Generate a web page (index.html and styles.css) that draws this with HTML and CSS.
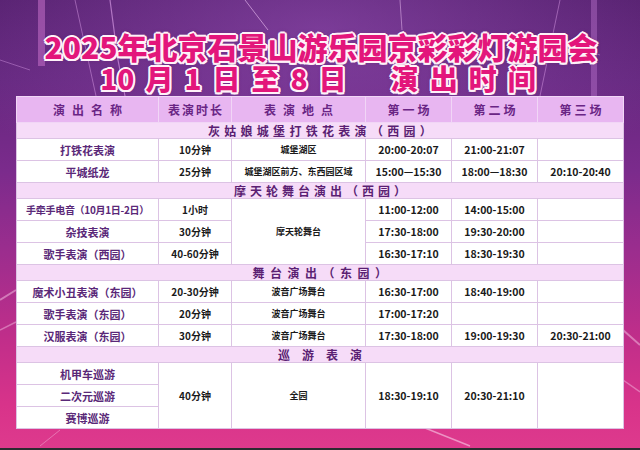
FILE: index.html
```html
<!DOCTYPE html>
<html lang="zh-CN">
<head>
<meta charset="utf-8">
<title>2025年北京石景山游乐园京彩彩灯游园会 演出时间</title>
<link rel="stylesheet" href="styles.css">
</head>
<body>
<div class="page">
  <svg class="deco" width="640" height="450" viewBox="0 0 640 450" aria-hidden="true">
    <defs>
      <radialGradient id="glow" cx="50%" cy="10%" r="60%">
        <stop offset="0" stop-color="#a35ac4" stop-opacity="0.45"/>
        <stop offset="1" stop-color="#a35ac4" stop-opacity="0"/>
      </radialGradient>
    </defs>
    <rect x="0" y="0" width="640" height="300" fill="url(#glow)"/>
    <rect x="38" y="0" width="7" height="66" fill="#c46fc8" opacity="0.55"/>
    <path d="M110 0 L118 60 L125 96" stroke="#e4a6f0" stroke-width="1.2" fill="none" opacity="0.6"/>
    <path d="M75 0 L96 96" stroke="#e4a6f0" stroke-width="1" fill="none" opacity="0.45"/>
    <path d="M245 0 L268 30" stroke="#f0c4f6" stroke-width="1" fill="none" opacity="0.6"/>
    <path d="M400 0 L402 30" stroke="#f0c4f6" stroke-width="1" fill="none" opacity="0.5"/>
    <path d="M560 0 L540 96" stroke="#e4a6f0" stroke-width="1" fill="none" opacity="0.45"/>
    <path d="M594 0 L594 96" stroke="#c47ad4" stroke-width="6" fill="none" opacity="0.4"/>
    <path d="M0 60 L30 70" stroke="#e4a6f0" stroke-width="1" fill="none" opacity="0.4"/>
    <path d="M560 40 L600 55" stroke="#e4a6f0" stroke-width="1" fill="none" opacity="0.4"/>
    <path d="M0 300 L16 290" stroke="#f6c6e6" stroke-width="2" fill="none" opacity="0.5"/>
    <path d="M0 330 L16 322" stroke="#f6c6e6" stroke-width="1.5" fill="none" opacity="0.45"/>
    <path d="M623 330 L640 345" stroke="#f6c6e6" stroke-width="2" fill="none" opacity="0.5"/>
    <path d="M623 380 L640 392" stroke="#f6c6e6" stroke-width="1.5" fill="none" opacity="0.45"/>
    <path d="M425 428 L470 446" stroke="#f8d0ea" stroke-width="1.5" fill="none" opacity="0.6"/>
    <path d="M40 446 L60 430" stroke="#f8d0ea" stroke-width="1" fill="none" opacity="0.4"/>
  </svg>

  <header class="title">
    <h1 class="title-main">2025年北京石景山游乐园京彩彩灯游园会</h1>
    <p class="title-sub">10<span class="sp"></span>月<span class="sp"></span>1<span class="sp"></span>日<span class="sp"></span>至<span class="sp"></span>8<span class="sp"></span>日<span class="gap"></span>演<span class="sp"></span>出<span class="sp"></span>时<span class="sp"></span>间</p>
  </header>

  <table class="sched">
    <colgroup>
      <col class="c1"><col class="c2"><col class="c3"><col class="c4"><col class="c5"><col class="c6">
    </colgroup>
    <tr class="hd">
      <td class="wide">演出名称</td>
      <td class="narrow">表演时长</td>
      <td class="wide">表演地点</td>
      <td class="mid">第一场</td>
      <td class="mid">第二场</td>
      <td class="mid">第三场</td>
    </tr>
    <tr class="sec"><td colspan="6" class="s1">灰姑娘城堡打铁花表演（西园）</td></tr>
    <tr class="row">
      <td class="name">打铁花表演</td><td class="dur">10分钟</td><td class="loc">城堡湖区</td>
      <td class="tm">20:00-20:07</td><td class="tm">21:00-21:07</td><td class="tm"></td>
    </tr>
    <tr class="row">
      <td class="name">平城纸龙</td><td class="dur">25分钟</td><td class="loc">城堡湖区前方、东西园区域</td>
      <td class="tm">15:00—15:30</td><td class="tm">18:00—18:30</td><td class="tm">20:10-20:40</td>
    </tr>
    <tr class="sec"><td colspan="6" class="s2">摩天轮舞台演出（西园）</td></tr>
    <tr class="row">
      <td class="name tight">手牵手电音（10月1日-2日）</td><td class="dur">1小时</td><td class="loc" rowspan="3">摩天轮舞台</td>
      <td class="tm">11:00-12:00</td><td class="tm">14:00-15:00</td><td class="tm"></td>
    </tr>
    <tr class="row">
      <td class="name">杂技表演</td><td class="dur">30分钟</td>
      <td class="tm">17:30-18:00</td><td class="tm">19:30-20:00</td><td class="tm"></td>
    </tr>
    <tr class="row">
      <td class="name">歌手表演（西园）</td><td class="dur">40-60分钟</td>
      <td class="tm">16:30-17:10</td><td class="tm">18:30-19:30</td><td class="tm"></td>
    </tr>
    <tr class="sec"><td colspan="6" class="s3">舞台演出（东园）</td></tr>
    <tr class="row">
      <td class="name">魔术小丑表演（东园）</td><td class="dur">20-30分钟</td><td class="loc">波音广场舞台</td>
      <td class="tm">16:30-17:00</td><td class="tm">18:40-19:00</td><td class="tm"></td>
    </tr>
    <tr class="row">
      <td class="name">歌手表演（东园）</td><td class="dur">20分钟</td><td class="loc">波音广场舞台</td>
      <td class="tm">17:00-17:20</td><td class="tm"></td><td class="tm"></td>
    </tr>
    <tr class="row">
      <td class="name">汉服表演（东园）</td><td class="dur">30分钟</td><td class="loc">波音广场舞台</td>
      <td class="tm">17:30-18:00</td><td class="tm">19:00-19:30</td><td class="tm">20:30-21:00</td>
    </tr>
    <tr class="sec"><td colspan="6" class="s4">巡游表演</td></tr>
    <tr class="row">
      <td class="name">机甲车巡游</td><td class="dur" rowspan="3">40分钟</td><td class="loc" rowspan="3">全园</td>
      <td class="tm" rowspan="3">18:30-19:10</td><td class="tm" rowspan="3">20:30-21:10</td><td class="tm" rowspan="3"></td>
    </tr>
    <tr class="row"><td class="name">二次元巡游</td></tr>
    <tr class="row"><td class="name">赛博巡游</td></tr>
  </table>
  <div class="floor"></div>
</div>
</body>
</html>
```

FILE: styles.css
```css
html, body {
  margin: 0;
  padding: 0;
}
body {
  font-family: "Noto Sans CJK SC", "Noto Sans", sans-serif;
  background: #2a2a2e;
}
.page {
  position: relative;
  width: 640px;
  height: 450px;
  overflow: hidden;
  display: flex;
  flex-direction: column;
  background: linear-gradient(180deg, #55206e 0%, #65287f 18%, #7b2b8c 38%, #9a2d8e 55%, #c02e8a 75%, #d8338a 90%, #de3a8d 100%);
}
.deco {
  position: absolute;
  left: 0;
  top: 0;
  z-index: 0;
}
.title {
  position: relative;
  z-index: 1;
  padding-top: 29px;
  text-align: center;
}
.title-main,
.title-sub {
  margin: 0;
  font-weight: 900;
  color: #e3167b;
  text-shadow:
    2px 0 0 #fff2f9, -2px 0 0 #fff2f9, 0 2px 0 #fff2f9, 0 -2px 0 #fff2f9,
    1.5px 1.5px 0 #fff2f9, -1.5px 1.5px 0 #fff2f9, 1.5px -1.5px 0 #fff2f9, -1.5px -1.5px 0 #fff2f9,
    0 0 4px rgba(90, 20, 90, 0.6);
}
.title-main {
  font-size: 30px;
  line-height: 34px;
  letter-spacing: 0;
  padding-left: 2px;
}
.title-sub {
  font-size: 28px;
  line-height: 30px;
  padding-right: 4px;
}
.title-sub .sp {
  display: inline-block;
  width: 11px;
}
.title-sub .gap {
  display: inline-block;
  width: 44px;
}
.sched {
  position: relative;
  z-index: 1;
  margin: 3px 0 0 16px;
  width: 607px;
  table-layout: fixed;
  border-collapse: collapse;
  background: #ffffff;
  color: #1a1a1a;
  font-weight: 700;
  text-align: center;
}
.c1 { width: 142px; }
.c2 { width: 73px; }
.c3 { width: 134px; }
.c4 { width: 86px; }
.c5 { width: 86px; }
.c6 { width: 86px; }
.sched td {
  padding: 0;
  border: 1px solid #dcc3e4;
  vertical-align: middle;
  white-space: nowrap;
  overflow: hidden;
}
.hd td {
  height: 25px;
  background: #e8b6f1;
  border-color: #f1d6f6;
  color: #6a2585;
  font-size: 12px;
  line-height: 14px;
}
.hd .wide { letter-spacing: 7px; text-indent: 7px; }
.hd .narrow { letter-spacing: 2px; text-indent: 2px; }
.hd .mid { letter-spacing: 3px; text-indent: 3px; }
.sec td {
  height: 15px;
  background: #f6dcf8;
  color: #5b1f73;
  font-size: 12px;
  line-height: 14px;
}
.s1 { letter-spacing: 4.3px; text-indent: 4px; }
.s2 { letter-spacing: 4px; text-indent: 4px; }
.s3 { letter-spacing: 5.5px; text-indent: 5px; }
.s4 { letter-spacing: 12px; text-indent: 12px; }
.row td {
  height: 21px;
  line-height: 14px;
}
.name {
  color: #5a2878;
  font-size: 11px;
}
.name.tight {
  font-size: 10px;
  letter-spacing: -0.3px;
}
.dur {
  font-size: 10px;
}
.loc {
  font-size: 9px;
}
.tm {
  font-size: 10.5px;
}
.floor {
  margin-top: auto;
  height: 2px;
  background: #2b2b30;
  position: relative;
  z-index: 1;
}
```
